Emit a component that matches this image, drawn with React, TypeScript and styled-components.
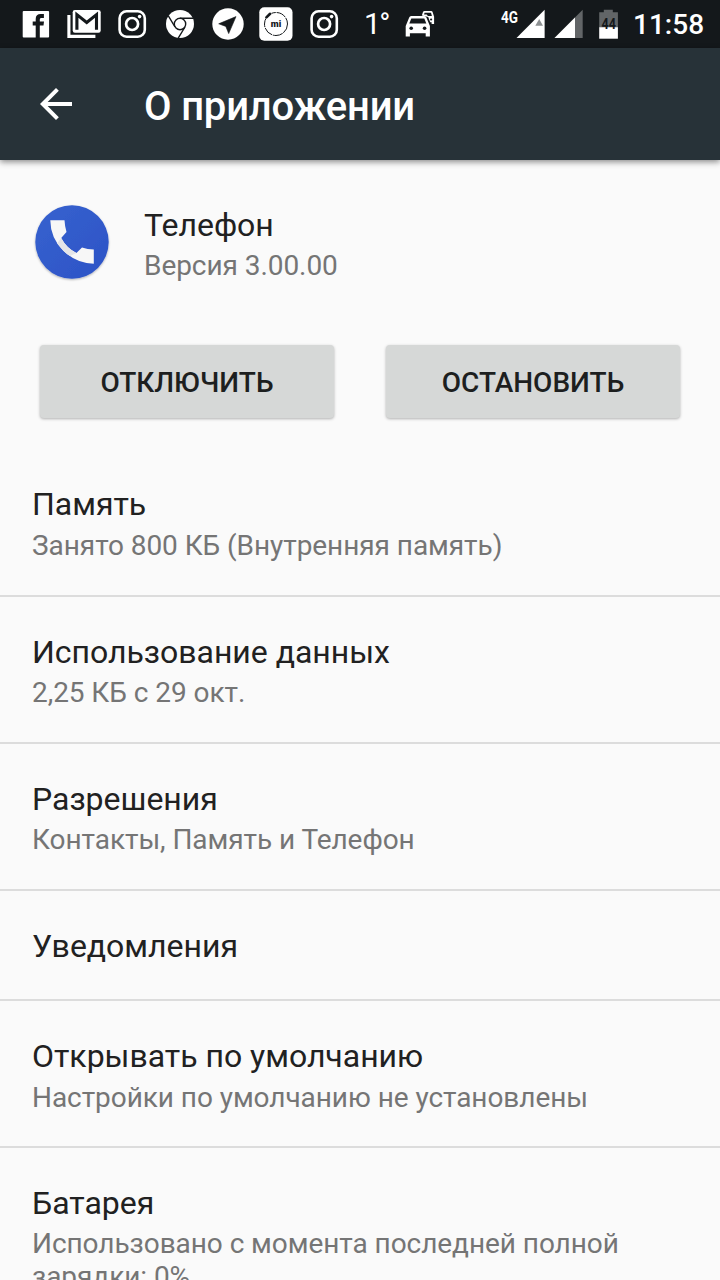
import React from 'react';
import styled, { createGlobalStyle } from 'styled-components';

const DARK = '#14181b';

const GlobalStyle = createGlobalStyle`
  *, *::before, *::after { box-sizing: border-box; }
  html, body { margin: 0; padding: 0; background: #fafafa; }
  body { font-family: Roboto, "Noto Sans", sans-serif; color: #212121; }
`;

const Screen = styled.div`
  width: 720px;
  height: 1280px;
  overflow: hidden;
  display: flex;
  flex-direction: column;
  background: #fafafa;
`;

const StatusBar = styled.header`
  flex: none;
  height: 48px;
  display: flex;
  justify-content: space-between;
  padding-left: 12px;
  background: ${DARK};
  color: #fff;
`;

const StatusGroup = styled.div`
  display: flex;
  align-items: center;
`;

const StatusIcon = styled.svg<{ $width?: number }>`
  flex: none;
  display: block;
  width: ${({ $width = 48 }) => $width}px;
  height: 48px;
`;

const Temperature = styled.span`
  width: 48px;
  padding-left: 16px;
  font-size: 30px;
  line-height: 48px;
  font-weight: 400;
  letter-spacing: -1.6px;
`;

const Clock = styled.time`
  width: 87px;
  height: 48px;
  font-size: 28px;
  font-weight: 500;
  line-height: 50px;
`;

const AppBar = styled.div`
  flex: none;
  height: 112px;
  display: flex;
  align-items: center;
  padding-left: 32px;
  background: #273238;
  color: #fff;
  box-shadow: 0 2px 6px rgba(0, 0, 0, 0.45);
  z-index: 1;
`;

const BackButton = styled.button`
  width: 112px;
  height: 48px;
  padding: 0;
  border: 0;
  background: none;
  color: inherit;
  text-align: left;

  svg { display: block; }
`;

const PageTitle = styled.h1`
  margin: 0;
  padding-top: 5px;
  font-size: 40px;
  line-height: 48px;
  font-weight: 500;
  letter-spacing: -0.17px;
`;

const AppInfo = styled.section`
  flex: none;
  display: flex;
  align-items: flex-start;
  gap: 32px;
  padding: 42px 32px 0;
  height: 180px;
`;

const AppIcon = styled.svg`
  width: 80px;
  height: 80px;
`;

const Title = styled.div`
  font-size: 32px;
  line-height: 43px;
  letter-spacing: -0.02px;
`;

const Summary = styled.div`
  padding-top: 3px;
  font-size: 28px;
  line-height: 33px;
  letter-spacing: -0.06px;
  color: #757575;
`;

const AppText = styled.div`
  padding-top: 2px;

  ${Summary} { padding-top: 2px; }
`;

const Actions = styled.div`
  flex: none;
  display: flex;
  gap: 52px;
  height: 110px;
  padding: 5px 40px 0;
`;

const ActionButton = styled.button`
  flex: none;
  width: 294px;
  height: 73px;
  padding: 1px 0 0;
  border: 0;
  border-radius: 4px;
  background: #d6d8d7;
  box-shadow: 0 1px 3px rgba(0, 0, 0, 0.3);
  color: #1d1f1f;
  font: 500 28px/33px Roboto, sans-serif;
`;

const List = styled.main`
  display: flex;
  flex-direction: column;
`;

const Row = styled.section<{ $single?: boolean }>`
  flex: none;
  height: ${({ $single }) => ($single ? 110 : 147)}px;
  padding: 33px 32px 0;
  border-bottom: 2px solid #dcdcdc;

  & + & { padding-top: 34px; }
  & + & ${Summary} { padding-top: 2px; }

  &:last-child {
    height: 180px;
    border-bottom: 0;
  }
`;

const rows: { title: string; summary?: string }[] = [
  { title: 'Память', summary: 'Занято 800 КБ (Внутренняя память)' },
  { title: 'Использование данных', summary: '2,25 КБ с 29 окт.' },
  { title: 'Разрешения', summary: 'Контакты, Память и Телефон' },
  { title: 'Уведомления' },
  { title: 'Открывать по умолчанию', summary: 'Настройки по умолчанию не установлены' },
  { title: 'Батарея', summary: 'Использовано с момента последней полной зарядки: 0%' },
];

const FacebookIcon = () => (
  <StatusIcon viewBox="0 0 48 48">
    <rect x="10.7" y="11" width="26.4" height="26.5" rx="1" fill="#fff" />
    <path d="M23.7 38V25.5h-3v-4h3v-2.4c0-3.3 1.8-5 5-5h3.2v4H29.6c-1.3 0-1.8.6-1.8 1.8v1.6h4.2l-.5 4h-3.7V38z" fill={DARK} />
  </StatusIcon>
);

const GmailIcon = () => (
  <StatusIcon viewBox="0 0 48 48">
    <path d="M8.9 15v21.4h26.5" fill="none" stroke="#fff" strokeWidth="3.1" />
    <rect x="12.7" y="10" width="28" height="22.8" rx="2.2" fill="#fff" />
    <path d="M16.9 29.7V14.6L26.7 22.4L36.5 14.6V29.7" fill="none" stroke={DARK} strokeWidth="3.1" />
  </StatusIcon>
);

const InstagramIcon = () => (
  <StatusIcon viewBox="0 0 48 48" fill="none" stroke="#fff">
    <rect x="11.6" y="11.3" width="25.2" height="25.4" rx="7" strokeWidth="2.6" />
    <circle cx="24.1" cy="24" r="6" strokeWidth="2.7" />
    <circle cx="31.6" cy="16.6" r="1.8" fill="#fff" stroke="none" />
  </StatusIcon>
);

const ChromeIcon = () => (
  <StatusIcon viewBox="0 0 48 48">
    <circle cx="24" cy="24" r="14" fill="#fff" />
    <g fill="none" stroke={DARK} strokeWidth="1.4">
      <circle cx="24" cy="24" r="5.7" />
      <path d="M24 18.2H37.5M29 27L22.2 38.2M19 27L12.2 15.6" />
    </g>
  </StatusIcon>
);

const TelegramIcon = () => (
  <StatusIcon viewBox="0 0 48 48">
    <circle cx="24" cy="24" r="15.7" fill="#fff" />
    <path d="M32 16.6L14.7 23.8L21.8 26.4L24.7 33.6Z" fill={DARK} stroke={DARK} strokeWidth=".6" strokeLinejoin="round" />
  </StatusIcon>
);

const MiIcon = () => (
  <StatusIcon viewBox="0 0 48 48">
    <rect x="7.3" y="7.2" width="33.2" height="33.6" rx="5" fill="#fff" />
    <circle cx="24" cy="24" r="11.5" fill="none" stroke={DARK} strokeWidth="1" strokeDasharray="10 .9" />
    <path d="M13.4 18.4L19 12.9" stroke="#fff" strokeWidth="5" />
    <path d="M14.4 17.4L18.1 13.8" stroke={DARK} strokeWidth="2.6" strokeLinecap="round" />
    <text x="24" y="26.6" textAnchor="middle" fontFamily="Roboto" fontWeight="900" fontSize="8.5" textLength="10.4" lengthAdjust="spacingAndGlyphs" fill={DARK}>mi</text>
  </StatusIcon>
);

const TrafficIcon = () => (
  <StatusIcon viewBox="396 0 48 48">
    <path d="M421.8 15.4L423 12.1Q423.4 11 424.6 11h6.5q1.2 0 1.5 1.1l1.5 4.6v7.2h-2.5v-1.6h-1.4l-2-5.3z" fill="#fff" />
    <path d="M424 14.6l.6-1.8h6.4l.9 3.3h-4l-1.2-1.5z" fill={DARK} />
    <circle cx="431.1" cy="19.5" r="1.1" fill={DARK} />
    <path d="M409.2 17.5q.5-1.5 2-1.5h13.2q1.5 0 2 1.5l3.5 8.5v10.5h-4.2v-3.3h-15.8v3.3h-4.2V26z" fill="#fff" />
    <path d="M411.3 18.4h13l2 5.2h-17z" fill={DARK} />
    <circle cx="411.2" cy="28.3" r="1.8" fill={DARK} />
    <circle cx="424.6" cy="28.3" r="1.8" fill={DARK} />
  </StatusIcon>
);

const SystemIcons = () => (
  <StatusIcon $width={134} viewBox="499 0 134 48">
    <text x="501" y="22.8" fontFamily="Roboto" fontWeight="700" fontSize="16.2" textLength="17" lengthAdjust="spacingAndGlyphs" fill="#fff">4G</text>
    <path d="M516.5 38L544.6 9.8V38z" fill="#fff" />
    <path d="M535.3 25.8L539.2 19L543 25.8z" fill="#8d9092" />
    <path d="M554.5 38L582.7 9.8V38z" fill="#626567" />
    <path d="M554.5 38L575 17.5V38z" fill="#fff" />
    <path d="M599.2 12.3h4.6V9.7h9v2.6h5.1v14.9h-18.7z" fill="#626567" />
    <path d="M599.2 27.2h18.7V38.7h-18.7z" fill="#fff" />
    <text x="608.7" y="29" textAnchor="middle" fontFamily="Roboto" fontWeight="700" fontSize="14.5" textLength="14.4" lengthAdjust="spacingAndGlyphs" fill={DARK}>44</text>
  </StatusIcon>
);

export default function App() {
  return (
    <>
      <GlobalStyle />
      <Screen>
        <StatusBar>
          <StatusGroup>
            <FacebookIcon />
            <GmailIcon />
            <InstagramIcon />
            <ChromeIcon />
            <TelegramIcon />
            <MiIcon />
            <InstagramIcon />
            <Temperature>1°</Temperature>
            <TrafficIcon />
          </StatusGroup>
          <StatusGroup>
            <SystemIcons />
            <Clock>11:58</Clock>
          </StatusGroup>
        </StatusBar>

        <AppBar>
          <BackButton aria-label="Назад">
            <svg width="48" height="48" viewBox="0 0 24 24" fill="#fff">
              <path d="M20 11H7.83l5.59-5.59L12 4l-8 8 8 8 1.41-1.41L7.83 13H20z" />
            </svg>
          </BackButton>
          <PageTitle>О приложении</PageTitle>
        </AppBar>

        <AppInfo>
          <AppIcon viewBox="0 0 80 80">
            <defs>
              <linearGradient id="disc" x1="0" y1="0" x2="1" y2="1">
                <stop offset="0" stopColor="#3762cf" />
                <stop offset="1" stopColor="#2c53c6" />
              </linearGradient>
              <filter id="discShadow" x="-10%" y="-10%" width="120%" height="120%">
                <feDropShadow dx="0" dy="1" stdDeviation="1" floodOpacity=".3" />
              </filter>
            </defs>
            <circle cx="40" cy="40" r="36.7" fill="url(#disc)" filter="url(#discShadow)" />
            <path d="M18.3 18.2H32.5Q32.8 24.2 34.5 30L29.2 36Q34.4 46 44.4 51L50 45.5Q55.5 47.3 61.8 47.5V61.7Q44.5 61.5 31.3 48.7Q18.5 36 18.3 18.2Z" fill="#f7f7f7" />
            <path d="M29.2 36Q34.4 46 44.4 51L38 54Q31 49.6 25.2 41.3Z" fill="#e4e5e8" />
          </AppIcon>
          <AppText>
            <Title>Телефон</Title>
            <Summary>Версия 3.00.00</Summary>
          </AppText>
        </AppInfo>

        <Actions>
          <ActionButton>ОТКЛЮЧИТЬ</ActionButton>
          <ActionButton>ОСТАНОВИТЬ</ActionButton>
        </Actions>

        <List>
          {rows.map(({ title, summary }) => (
            <Row key={title} $single={!summary}>
              <Title>{title}</Title>
              {summary && <Summary>{summary}</Summary>}
            </Row>
          ))}
        </List>
      </Screen>
    </>
  );
}
